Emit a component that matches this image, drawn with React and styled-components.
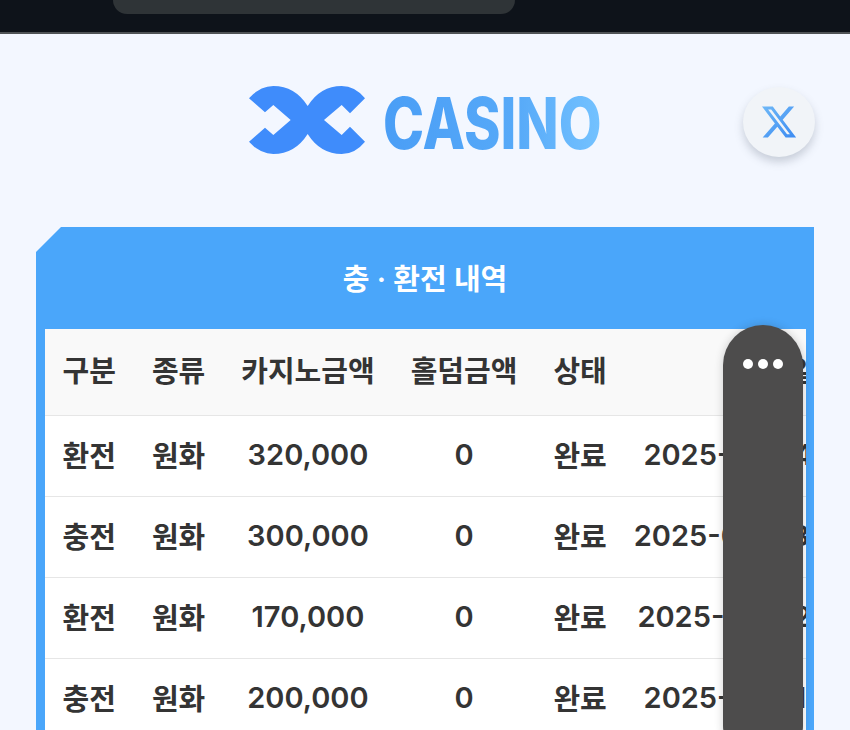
import React from 'react';
import styled, { createGlobalStyle } from 'styled-components';

const rows = [
  { type: '환전', kind: '원화', casino: '320,000', holdem: '0', state: '완료', date: '2025-09-14 12:21:35' },
  { type: '충전', kind: '원화', casino: '300,000', holdem: '0', state: '완료', date: '2025-09-08 20:36:25' },
  { type: '환전', kind: '원화', casino: '170,000', holdem: '0', state: '완료', date: '2025-09-22 18:42:50' },
  { type: '충전', kind: '원화', casino: '200,000', holdem: '0', state: '완료', date: '2025-09-11 14:27:44' },
];

const GlobalStyle = createGlobalStyle`
  html, body {
    margin: 0;
    height: 730px;
    overflow: hidden;
    background: #f3f7ff;
    font-family: Inter, "Noto Sans CJK KR", sans-serif;
  }
`;

const Page = styled.div`
  position: relative;
  width: 850px;
  height: 730px;
  overflow: hidden;
`;

const TopBar = styled.div`
  height: 32px;
  background: #0e131a;
  border-bottom: 2px solid #4f5356;
  padding-left: 113px;
`;

const Notch = styled.div`
  width: 402px;
  height: 14px;
  background: #2f3437;
  border-radius: 0 0 26px 26px;
`;

const Main = styled.main`
  padding: 0 36px;
`;

const Header = styled.header`
  height: 193px;
  display: flex;
  align-items: flex-start;
  padding: 46px 0 0 209px;
  box-sizing: border-box;
`;

const Logo = styled.div`
  display: flex;
  align-items: flex-start;
  gap: 13px;
  filter: blur(0.7px);
`;

const LogoText = styled.span`
  display: block;
  width: 300px;
  margin: 3px -85px 0 0;
  font-family: Inter, sans-serif;
  font-weight: 800;
  font-size: 71px;
  line-height: 80px;
  white-space: nowrap;
  transform: scaleX(0.78);
  transform-origin: left center;
  background: linear-gradient(90deg, #4a9ef6 0%, #56a9f8 60%, #74c2ff 100%);
  background-size: 280px 100%;
  background-repeat: no-repeat;
  -webkit-background-clip: text;
  background-clip: text;
  color: transparent;
`;

const XButton = styled.button`
  position: absolute;
  left: 743px;
  top: 87px;
  width: 72px;
  height: 70px;
  padding: 0;
  border: 0;
  border-radius: 50%;
  background: #f1f4f8;
  box-shadow: 0 5px 9px rgba(90, 100, 120, 0.28);
  display: flex;
  align-items: center;
  justify-content: center;
`;

const Panel = styled.section`
  background: #4aa6fa;
  padding: 0 8.5px;
  clip-path: polygon(25px 0, 100% 0, 100% 100%, 0 100%, 0 25px);
`;

const Title = styled.h2`
  margin: 0;
  height: 102px;
  padding-bottom: 2px;
  box-sizing: border-box;
  display: flex;
  align-items: center;
  justify-content: center;
  font-size: 29px;
  font-weight: 600;
  color: #fff;
`;

const TableWrap = styled.div`
  background: #fff;
  overflow: hidden;
`;

const Table = styled.table`
  border-collapse: collapse;
  width: max-content;
  color: #343434;
  font-size: 29px;
  font-weight: 600;
  white-space: nowrap;
`;

const HeadCell = styled.th`
  height: 86px;
  padding: 0 18px 5px;
  box-sizing: border-box;
  background: #f9f9f9;
  font-weight: 600;
  text-align: center;

  &:last-child {
    padding-left: 9px;
  }
`;

const Cell = styled.td`
  height: 81px;
  padding: 0 18px 3px;
  box-sizing: border-box;
  border-top: 1px solid #e6e6e6;
  text-align: center;

  &:last-child {
    padding-left: 9px;
  }
`;

const Floating = styled.div`
  position: absolute;
  left: 723px;
  top: 325px;
  width: 80px;
  height: 440px;
  background: #4d4c4c;
  border-radius: 40px;
  box-shadow: 0 0 8px rgba(40, 40, 40, 0.22);
  display: flex;
  justify-content: center;
  gap: 5px;
  padding-top: 34px;
  box-sizing: border-box;
`;

const Dot = styled.span`
  width: 10px;
  height: 10px;
  border-radius: 50%;
  background: #fff;
`;

export default function App() {
  return (
    <Page>
      <GlobalStyle />
      <TopBar>
        <Notch />
      </TopBar>
      <Main>
        <Header>
          <Logo>
            <svg width="125" height="80" viewBox="0 0 375 240">
              <path
                fill="#3f8cfb"
                d="M12 55 Q45 18 85 18 Q150 18 188 78 Q226 18 290 18 Q330 18 360 55 L315 100 L290 75 L237 120 L290 165 L315 140 L360 185 Q330 222 290 222 Q226 222 188 162 Q150 222 85 222 Q45 222 12 185 L60 143 L85 165 L137 120 L85 75 L60 97 Z"
              />
            </svg>
            <LogoText>CASINO</LogoText>
          </Logo>
        </Header>
        <Panel>
          <Title>충 · 환전 내역</Title>
          <TableWrap>
            <Table>
              <thead>
                <tr>
                  <HeadCell>구분</HeadCell>
                  <HeadCell>종류</HeadCell>
                  <HeadCell>카지노금액</HeadCell>
                  <HeadCell>홀덤금액</HeadCell>
                  <HeadCell>상태</HeadCell>
                  <HeadCell>처리일시</HeadCell>
                </tr>
              </thead>
              <tbody>
                {rows.map((r, i) => (
                  <tr key={i}>
                    <Cell>{r.type}</Cell>
                    <Cell>{r.kind}</Cell>
                    <Cell>{r.casino}</Cell>
                    <Cell>{r.holdem}</Cell>
                    <Cell>{r.state}</Cell>
                    <Cell>{r.date}</Cell>
                  </tr>
                ))}
              </tbody>
            </Table>
          </TableWrap>
        </Panel>
      </Main>
      <XButton aria-label="X">
        <svg width="40" height="38" viewBox="0 0 24 24">
          <defs>
            <linearGradient id="xBlue" x1="0" y1="0" x2="1" y2="1">
              <stop offset="0" stopColor="#6fb8f7" />
              <stop offset="1" stopColor="#3c8bf2" />
            </linearGradient>
          </defs>
          <path
            fill="url(#xBlue)"
            d="M18.244 2.25h3.308l-7.227 8.26 8.502 11.24H16.17l-5.214-6.817L4.99 21.75H1.68l7.73-8.835L1.254 2.25H8.08l4.713 6.231zm-1.161 17.52h1.833L7.084 4.126H5.117z"
          />
        </svg>
      </XButton>
      <Floating>
        <Dot />
        <Dot />
        <Dot />
      </Floating>
    </Page>
  );
}
